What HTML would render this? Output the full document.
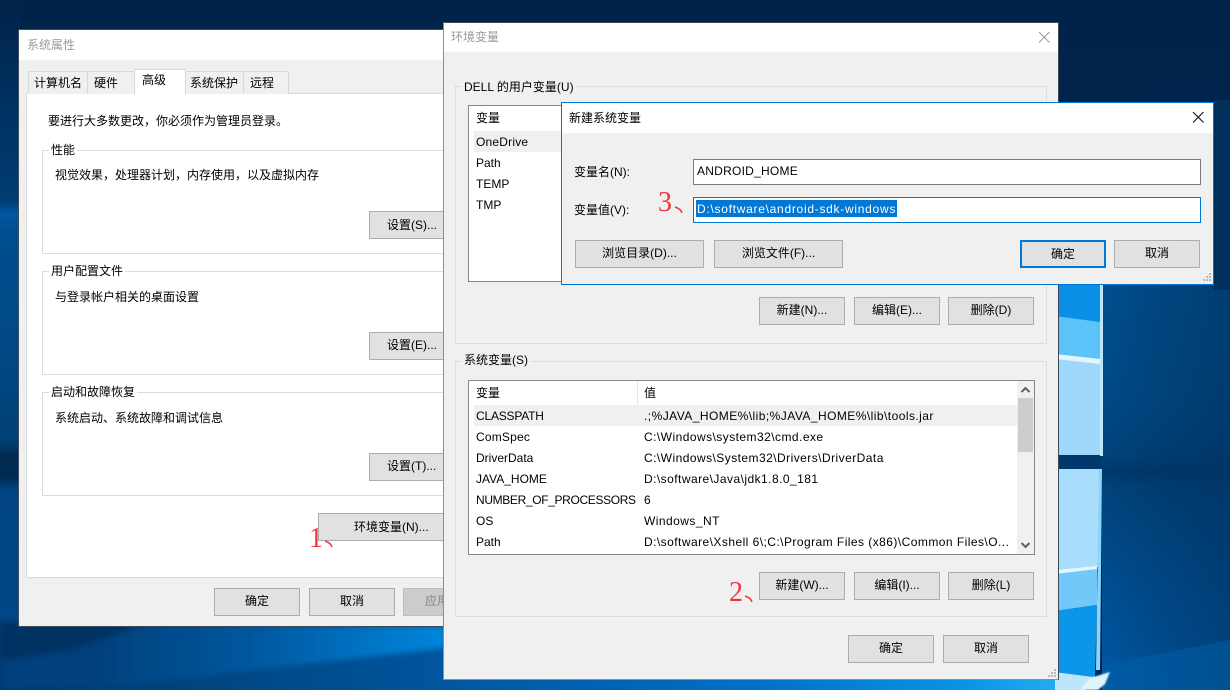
<!DOCTYPE html>
<html lang="zh">
<head>
<meta charset="utf-8">
<title>环境变量</title>
<style>
html,body{margin:0;padding:0;background:#002a55}
#p{position:relative;width:1230px;height:690px;overflow:hidden;font:12px/16px "Liberation Sans","Noto Sans CJK SC",sans-serif;color:#000}
#p div{position:absolute;box-sizing:border-box}
.t{white-space:nowrap;height:16px}
.v{letter-spacing:.45px}
.w{background:#f0f0f0}
.tb{background:#fff;left:0;top:0;right:0}
.b{background:#e1e1e1;border:1px solid #adadad;text-align:center;line-height:25px;white-space:nowrap}
.g{border:1px solid #dcdcdc}
.l{background:inherit;padding:0 2px;white-space:nowrap;height:16px}
.r{font-family:"Liberation Serif","Noto Serif CJK SC",serif;color:#f4333f;font-size:28px;line-height:30px;white-space:nowrap}
</style>
</head>
<body>
<div id="p">
<svg style="position:absolute;left:0;top:0" width="1230" height="690" viewBox="0 0 1230 690">
<defs>
<linearGradient id="bg" x1="0" y1="0" x2="0" y2="1">
<stop offset="0" stop-color="#00234a"/><stop offset="1" stop-color="#00274f"/>
</linearGradient>
<linearGradient id="left" x1="0" y1="0" x2="0" y2="690" gradientUnits="userSpaceOnUse">
<stop offset="0" stop-color="#00234a"/><stop offset=".14" stop-color="#00305f"/><stop offset=".29" stop-color="#013c72"/><stop offset=".31" stop-color="#0058a0"/><stop offset=".335" stop-color="#004e90"/><stop offset=".55" stop-color="#00477f"/><stop offset=".64" stop-color="#003f74"/><stop offset=".66" stop-color="#012a50"/><stop offset=".69" stop-color="#012a50"/><stop offset=".71" stop-color="#004482"/><stop offset=".9" stop-color="#004785"/><stop offset=".93" stop-color="#003262"/><stop offset="1" stop-color="#003a72"/>
</linearGradient>
<linearGradient id="rv" x1="0" y1="285" x2="0" y2="690" gradientUnits="userSpaceOnUse">
<stop offset="0" stop-color="#004f8e"/><stop offset=".28" stop-color="#004a86"/><stop offset=".42" stop-color="#00427a"/><stop offset=".46" stop-color="#00386a"/><stop offset=".5" stop-color="#00427a"/><stop offset=".78" stop-color="#005096"/><stop offset="1" stop-color="#005aa4"/>
</linearGradient>
<linearGradient id="rh" x1="1102" y1="0" x2="1230" y2="0" gradientUnits="userSpaceOnUse">
<stop offset="0" stop-color="#003060" stop-opacity="0"/><stop offset=".45" stop-color="#002f5c" stop-opacity=".3"/><stop offset="1" stop-color="#002f5c" stop-opacity=".55"/>
</linearGradient>
<linearGradient id="bot" x1="440" y1="0" x2="1060" y2="0" gradientUnits="userSpaceOnUse">
<stop offset="0" stop-color="#00569f"/><stop offset=".5" stop-color="#006fc6"/><stop offset=".85" stop-color="#0a94e6"/><stop offset="1" stop-color="#24acf2"/>
</linearGradient>
<linearGradient id="up" x1="100" y1="0" x2="445" y2="0" gradientUnits="userSpaceOnUse">
<stop offset="0" stop-color="#00417c"/><stop offset=".45" stop-color="#00589f"/><stop offset="1" stop-color="#0086dc"/>
</linearGradient>
<linearGradient id="lo" x1="0" y1="0" x2="445" y2="0" gradientUnits="userSpaceOnUse">
<stop offset="0" stop-color="#003668"/><stop offset="1" stop-color="#00569e"/>
</linearGradient>
<filter id="bl" filterUnits="userSpaceOnUse" x="0" y="0" width="1230" height="690"><feGaussianBlur stdDeviation="3"/></filter>
<filter id="b1" filterUnits="userSpaceOnUse" x="0" y="0" width="1230" height="690"><feGaussianBlur stdDeviation=".7"/></filter>
</defs>
<rect width="1230" height="690" fill="url(#bg)"/>
<rect x="0" y="0" width="19" height="690" fill="url(#left)"/>
<rect x="0" y="626" width="445" height="64" fill="url(#lo)"/>
<polygon points="0,626 445,626 445,648 117,686 0,690" fill="url(#up)" filter="url(#bl)"/>
<polygon points="0,622 150,622 70,650 0,660" fill="#003262" filter="url(#bl)"/>
<rect x="440" y="678" width="625" height="12" fill="url(#bot)"/>
<rect x="1102" y="285" width="128" height="405" fill="url(#rv)"/>
<rect x="1102" y="285" width="128" height="405" fill="url(#rh)"/>
<rect x="1214" y="100" width="16" height="190" fill="#002f5c"/>
<polygon points="1102,690 1102,665 1230,640 1230,690" fill="#005ea8" opacity=".55"/>
<rect x="1055" y="280" width="46" height="45" fill="#0a8fe6"/>
<polygon points="1055,316 1100,322 1100,362 1055,355" fill="#5cc3f8"/>
<polygon points="1055,354 1100,359 1100,456 1055,456" fill="#a0d8fb"/>
<polygon points="1055,354 1100,359 1100,364 1055,359" fill="#e4f5fe"/>
<rect x="1055" y="455" width="47" height="14" fill="#00386c"/>
<polygon points="1055,469 1100,469 1098,567 1055,572" fill="#a8defb"/>
<polygon points="1055,570 1097,566 1097,570 1055,575" fill="#e4f5fe"/>
<polygon points="1055,574 1097,569 1097,605 1055,611" fill="#72c8f9"/>
<polygon points="1055,611 1097,605 1095,677 1055,672" fill="#0a96ea"/>
<polygon points="1100,285 1103,285 1103,456 1100,456" fill="#bfe7fc"/>
<polygon points="1099,469 1102,469 1100,670 1096,670" fill="#8bd4fa"/>
<polygon points="1055,672 1094,677 1102,678 1085,690 1055,690" fill="#bde6fc"/>
<polygon points="1090,678 1110,672 1105,684 1098,690 1080,690" fill="#dff3fe" filter="url(#b1)"/>
</svg>

<!-- Window 1 -->
<div class="w" style="left:18px;top:29px;width:440px;height:598px;border:1px solid #3c4a5a;border-right:0">
  <div class="tb" style="height:30px"></div>
  <div class="t" style="left:8px;top:7px;color:#9a9a9a">系统属性</div>
  <div style="left:7px;top:63px;width:430px;height:485px;background:#fff;border:1px solid #d9d9d9"></div>
  <div style="left:9px;top:41px;width:60px;height:23px;border:1px solid #d9d9d9;border-bottom:0;background:#f0f0f0"></div>
  <div class="t" style="left:15px;top:45px">计算机名</div>
  <div style="left:68px;top:41px;width:48px;height:23px;border:1px solid #d9d9d9;border-bottom:0;background:#f0f0f0"></div>
  <div class="t" style="left:75px;top:45px">硬件</div>
  <div style="left:166px;top:41px;width:59px;height:23px;border:1px solid #d9d9d9;border-bottom:0;background:#f0f0f0"></div>
  <div class="t" style="left:171px;top:45px">系统保护</div>
  <div style="left:224px;top:41px;width:46px;height:23px;border:1px solid #d9d9d9;border-bottom:0;background:#f0f0f0"></div>
  <div class="t" style="left:231px;top:45px">远程</div>
  <div style="left:115px;top:39px;width:52px;height:26px;border:1px solid #d9d9d9;border-bottom:0;background:#fff"></div>
  <div class="t" style="left:123px;top:42px">高级</div>
  <div class="t" style="left:29px;top:83px">要进行大多数更改，你必须作为管理员登录。</div>

  <div class="g" style="left:23px;top:120px;width:420px;height:104px;background:#fff"><div class="l" style="left:6px;top:-9px">性能</div></div>
  <div class="t" style="left:36px;top:137px">视觉效果，处理器计划，内存使用，以及虚拟内存</div>
  <div class="b" style="left:350px;top:181px;width:90px;height:28px;text-align:left;text-indent:17px;line-height:26px">设置(S)...</div>

  <div class="g" style="left:23px;top:241px;width:420px;height:104px;background:#fff"><div class="l" style="left:6px;top:-9px">用户配置文件</div></div>
  <div class="t" style="left:36px;top:259px">与登录帐户相关的桌面设置</div>
  <div class="b" style="left:350px;top:302px;width:90px;height:28px;text-align:left;text-indent:17px">设置(E)...</div>

  <div class="g" style="left:23px;top:362px;width:420px;height:104px;background:#fff"><div class="l" style="left:6px;top:-9px">启动和故障恢复</div></div>
  <div class="t" style="left:36px;top:380px">系统启动、系统故障和调试信息</div>
  <div class="b" style="left:350px;top:423px;width:90px;height:28px;text-align:left;text-indent:17px">设置(T)...</div>

  <div class="b" style="left:299px;top:483px;width:140px;height:28px;text-align:left;text-indent:35px;line-height:26px">环境变量(N)...</div>
  <div class="b" style="left:195px;top:558px;width:86px;height:28px">确定</div>
  <div class="b" style="left:290px;top:558px;width:86px;height:28px">取消</div>
  <div class="b" style="left:384px;top:558px;width:60px;height:28px;background:#ccc;border-color:#bfbfbf;color:#838383;text-align:left;text-indent:21px">应用</div>
  <div class="r" style="left:290px;top:494px">1</div>
  <svg style="position:absolute;left:305px;top:510px" width="14" height="10"><path d="M1 1C4 2 7 3.500 8 7" fill="none" stroke="#f4333f" stroke-width="1.500"/></svg>
</div>

<!-- Window 2 -->
<div class="w" style="left:443px;top:22px;width:616px;height:658px;border:1px solid #8a8f96;border-top-color:#3c4a5a;border-right-color:#3c4a5a">
  <div class="tb" style="height:29px"></div>
  <div class="t" style="left:7px;top:6px;color:#9a9a9a">环境变量</div>
  <svg style="position:absolute;left:594px;top:8px" width="13" height="13"><path d="M1 1L11.500 11.500M11.500 1L1 11.500" stroke="#9a9a9a" stroke-width="1" fill="none"/></svg>

  <div class="g" style="left:11px;top:63px;width:592px;height:258px;background:#f0f0f0"><div class="l" style="left:6px;top:-8px">DELL 的用户变量(U)</div></div>
  <div style="left:24px;top:82px;width:567px;height:177px;background:#fff;border:1px solid #828790"></div>
  <div class="t" style="left:32px;top:87px">变量</div>
  <div style="left:30px;top:108px;width:100px;height:21px;background:#f0f0f0"></div>
  <div class="t" style="left:32px;top:111px;letter-spacing:.2px">OneDrive</div>
  <div class="t" style="left:32px;top:132px">Path</div>
  <div class="t" style="left:32px;top:153px">TEMP</div>
  <div class="t" style="left:32px;top:174px">TMP</div>
  <div class="b" style="left:315px;top:274px;width:86px;height:28px">新建(N)...</div>
  <div class="b" style="left:410px;top:274px;width:86px;height:28px">编辑(E)...</div>
  <div class="b" style="left:504px;top:274px;width:86px;height:28px">删除(D)</div>

  <div class="g" style="left:11px;top:338px;width:592px;height:256px;background:#f0f0f0"><div class="l" style="left:6px;top:-10px">系统变量(S)</div></div>
  <div style="left:24px;top:357px;width:567px;height:175px;background:#fff;border:1px solid #828790"></div>
  <div style="left:193px;top:358px;width:1px;height:24px;background:#e5e5e5"></div>
  <div class="t" style="left:32px;top:362px">变量</div>
  <div class="t" style="left:200px;top:362px">值</div>
  <div style="left:30px;top:382px;width:543px;height:21px;background:#f0f0f0"></div>
  <div class="t" style="left:32px;top:385px;letter-spacing:-.2px">CLASSPATH</div><div class="t v" style="left:200px;top:385px">.;%JAVA_HOME%\lib;%JAVA_HOME%\lib\tools.jar</div>
  <div class="t" style="left:32px;top:406px;letter-spacing:.2px">ComSpec</div><div class="t v" style="left:200px;top:406px">C:\Windows\system32\cmd.exe</div>
  <div class="t" style="left:32px;top:427px">DriverData</div><div class="t v" style="left:200px;top:427px">C:\Windows\System32\Drivers\DriverData</div>
  <div class="t" style="left:32px;top:448px">JAVA_HOME</div><div class="t v" style="left:200px;top:448px">D:\software\Java\jdk1.8.0_181</div>
  <div class="t" style="left:32px;top:469px;letter-spacing:-.35px">NUMBER_OF_PROCESSORS</div><div class="t" style="left:200px;top:469px">6</div>
  <div class="t" style="left:32px;top:490px">OS</div><div class="t v" style="left:200px;top:490px">Windows_NT</div>
  <div class="t" style="left:32px;top:511px">Path</div><div class="t v" style="left:200px;top:511px">D:\software\Xshell 6\;C:\Program Files (x86)\Common Files\O...</div>
  <div style="left:573px;top:358px;width:17px;height:173px;background:#f0f0f0"></div>
  <div style="left:574px;top:375px;width:15px;height:54px;background:#cdcdcd"></div>
  <svg style="position:absolute;left:576px;top:363px" width="11" height="8"><path d="M1.500 6L5.500 2L9.500 6" fill="none" stroke="#606060" stroke-width="2"/></svg>
  <svg style="position:absolute;left:576px;top:518px" width="11" height="8"><path d="M1.500 2L5.500 6L9.500 2" fill="none" stroke="#606060" stroke-width="2"/></svg>
  <div class="b" style="left:315px;top:549px;width:86px;height:28px">新建(W)...</div>
  <div class="b" style="left:410px;top:549px;width:86px;height:28px">编辑(I)...</div>
  <div class="b" style="left:504px;top:549px;width:86px;height:28px">删除(L)</div>
  <div class="r" style="left:285px;top:555px">2</div>
  <svg style="position:absolute;left:300px;top:572px" width="14" height="10"><path d="M1 1C4 2 7 3.500 8 7" fill="none" stroke="#f4333f" stroke-width="1.500"/></svg>
  <div class="b" style="left:404px;top:612px;width:86px;height:28px">确定</div>
  <div class="b" style="left:499px;top:612px;width:86px;height:28px">取消</div>
  <svg style="position:absolute;left:604px;top:646px" width="10" height="10" fill="#b8b8b8"><rect x="6" y="0" width="2" height="2"/><rect x="3" y="3" width="2" height="2"/><rect x="6" y="3" width="2" height="2"/><rect x="0" y="6" width="2" height="2"/><rect x="3" y="6" width="2" height="2"/><rect x="6" y="6" width="2" height="2"/></svg>
</div>

<!-- Window 3 -->
<div class="w" style="left:561px;top:102px;width:653px;height:183px;border:1px solid #0078d7">
  <div class="tb" style="height:30px"></div>
  <div class="t" style="left:7px;top:7px">新建系统变量</div>
  <svg style="position:absolute;left:630px;top:8px" width="13" height="13"><path d="M1 1L11.500 11.500M11.500 1L1 11.500" stroke="#111" stroke-width="1.100" fill="none"/></svg>
  <div class="t" style="left:12px;top:61px">变量名(N):</div>
  <div class="t" style="left:12px;top:99px">变量值(V):</div>
  <div style="left:131px;top:56px;width:508px;height:26px;background:#fff;border:1px solid #7a7a7a"></div>
  <div class="t" style="left:135px;top:60px;letter-spacing:.25px">ANDROID_HOME</div>
  <div style="left:131px;top:94px;width:508px;height:26px;background:#fff;border:1px solid #0078d7"></div>
  <div style="left:134px;top:97px;width:201px;height:17px;background:#0078d7"></div>
  <div class="t" style="left:135px;top:98px;color:#fff;letter-spacing:.72px">D:\software\android-sdk-windows</div>
  <div class="r" style="left:96px;top:85px">3</div>
  <svg style="position:absolute;left:112px;top:103px" width="14" height="10"><path d="M1 1C4 2 7 3.500 8 7" fill="none" stroke="#f4333f" stroke-width="1.500"/></svg>
  <div class="b" style="left:13px;top:137px;width:129px;height:28px">浏览目录(D)...</div>
  <div class="b" style="left:152px;top:137px;width:129px;height:28px">浏览文件(F)...</div>
  <div class="b" style="left:458px;top:137px;width:86px;height:28px;border:2px solid #0078d7;line-height:24px">确定</div>
  <div class="b" style="left:552px;top:137px;width:86px;height:28px">取消</div>
  <svg style="position:absolute;left:641px;top:170px" width="10" height="10" fill="#b8b8b8"><rect x="6" y="0" width="2" height="2"/><rect x="3" y="3" width="2" height="2"/><rect x="6" y="3" width="2" height="2"/><rect x="0" y="6" width="2" height="2"/><rect x="3" y="6" width="2" height="2"/><rect x="6" y="6" width="2" height="2"/></svg>
</div>
</div>
</body>
</html>
